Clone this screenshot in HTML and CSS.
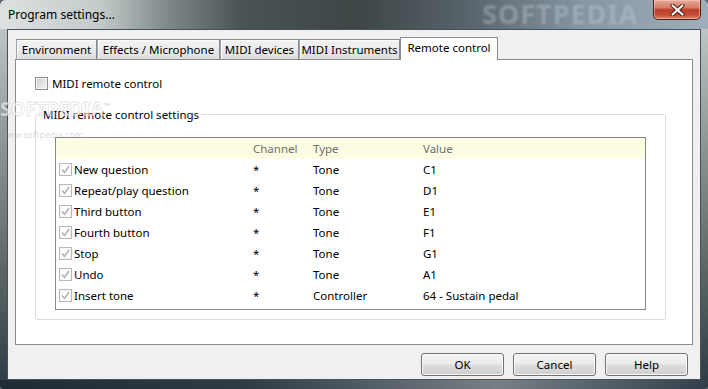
FILE: index.html
```html
<!DOCTYPE html>
<html>
<head>
  <title>Program settings...</title>
  <link rel="stylesheet" href="styles.css">
</head>
<body>
  <div class="window">
    <div class="titlebar">
      <span class="title">Program settings...</span>
      <button class="close" title="Close">
        <svg width="15" height="12" viewBox="0 0 15 12">
          <path d="M2.5 1.5 L12.5 10.5 M12.5 1.5 L2.5 10.5" stroke="#4d1b12" stroke-width="4.2" stroke-linecap="round"/>
          <path d="M2.5 1.5 L12.5 10.5 M12.5 1.5 L2.5 10.5" stroke="#ffffff" stroke-width="2.2" stroke-linecap="round"/>
        </svg>
      </button>
    </div>
    <div class="client">
      <div class="tabs">
        <div class="tab tab-env">Environment</div>
        <div class="tab tab-fx">Effects / Microphone</div>
        <div class="tab tab-dev">MIDI devices</div>
        <div class="tab tab-ins">MIDI Instruments</div>
        <div class="tab tab-remote active">Remote control</div>
      </div>
      <div class="panel">
        <label class="check">
          <span class="box"></span>
          MIDI remote control
        </label>
        <fieldset class="group">
          <legend>MIDI remote control settings</legend>
          <div class="list">
            <div class="row head">
              <span></span>
              <span>Channel</span>
              <span>Type</span>
              <span>Value</span>
            </div>
            <div class="row">
              <span class="name"><span class="box checked"></span>New question</span>
              <span>*</span><span>Tone</span><span>C1</span>
            </div>
            <div class="row">
              <span class="name"><span class="box checked"></span>Repeat/play question</span>
              <span>*</span><span>Tone</span><span>D1</span>
            </div>
            <div class="row">
              <span class="name"><span class="box checked"></span>Third button</span>
              <span>*</span><span>Tone</span><span>E1</span>
            </div>
            <div class="row">
              <span class="name"><span class="box checked"></span>Fourth button</span>
              <span>*</span><span>Tone</span><span>F1</span>
            </div>
            <div class="row">
              <span class="name"><span class="box checked"></span>Stop</span>
              <span>*</span><span>Tone</span><span>G1</span>
            </div>
            <div class="row">
              <span class="name"><span class="box checked"></span>Undo</span>
              <span>*</span><span>Tone</span><span>A1</span>
            </div>
            <div class="row">
              <span class="name"><span class="box checked"></span>Insert tone</span>
              <span>*</span><span>Controller</span><span>64 - Sustain pedal</span>
            </div>
          </div>
        </fieldset>
      </div>
      <div class="buttons">
        <button class="btn">OK</button>
        <button class="btn">Cancel</button>
        <button class="btn">Help</button>
      </div>
    </div>
    <div class="wm wm-title">SOFTPEDIA</div>
    <div class="wm wm-logo">SOFTPEDIA<sup>™</sup></div>
    <div class="wm wm-url">www.softpedia.com</div>
  </div>
</body>
</html>
```

FILE: styles.css
```css
* {
  box-sizing: border-box;
}
body {
  margin: 0;
  font-family: "Noto Sans", "DejaVu Sans", sans-serif;
  font-size: 11.5px;
  color: #000;
  background: #5d6a74;
}
.window {
  position: relative;
  width: 708px;
  height: 389px;
  padding: 0 7px 9px;
  display: flex;
  flex-direction: column;
  overflow: hidden;
  border-radius: 6px 6px 4px 4px;
  background:
    linear-gradient(90deg, rgba(20, 28, 34, 0.55) 0%, rgba(80, 100, 120, 0) 35%, rgba(255, 255, 255, 0.35) 70%, rgba(60, 80, 100, 0.2) 100%) bottom / 100% 9px no-repeat,
    linear-gradient(180deg, #c9cfd0 0%, #8f9a98 35%, #5b6664 70%, #2e3a44 100%);
}
.titlebar {
  height: 29px;
  margin: 0 -7px;
  padding: 0 7px 0 8px;
  display: flex;
  justify-content: space-between;
  align-items: flex-start;
  background: linear-gradient(90deg, #dde1e1 0%, #c4cbcb 14%, #7d8787 24%, #4b5454 34%, #3d4545 50%, #58636b 66%, #8595a1 82%, #9eafbb 100%);
}
.title {
  padding-top: 7px;
  line-height: 16px;
  font-size: 12px;
}
.close {
  width: 48px;
  height: 20px;
  padding: 0;
  display: flex;
  align-items: center;
  justify-content: center;
  border: 1px solid #4e2018;
  border-top: 0;
  border-radius: 0 0 5px 5px;
  background: linear-gradient(180deg, #e8ab9d 0%, #d67b66 40%, #bd3f27 52%, #c64f36 80%, #de8b70 100%);
  box-shadow: inset 0 0 0 1px rgba(255, 220, 210, 0.45);
}
.client {
  flex: 1;
  border: 1px solid #45525c;
  background: #f0f0f0;
  padding: 7px 7px 0;
}
.tabs {
  display: flex;
  align-items: flex-end;
  height: 22px;
  padding-left: 1px;
}
.tab {
  height: 20px;
  border: 1px solid #898c95;
  border-bottom: 0;
  border-left-color: #a0a3aa;
  background: linear-gradient(180deg, #f3f3f3 0%, #ebebeb 50%, #dddddd 100%);
  box-shadow: inset 1px 1px 0 #fbfbfb;
  display: flex;
  align-items: center;
  justify-content: center;
  white-space: nowrap;
}
.tab-env { width: 81px; }
.tab-fx { width: 123px; }
.tab-dev { width: 79px; }
.tab-ins { width: 101px; }
.tab-remote { width: 98px; }
.tab.active {
  height: 23px;
  margin-bottom: -1px;
  position: relative;
  z-index: 1;
  background: #fff;
  box-shadow: none;
  border-left-color: #898c95;
  padding-bottom: 3px;
}
.panel {
  height: 286px;
  border: 1px solid #898c95;
  background: #fff;
  padding: 17px 26px 0 19px;
}
.check {
  display: flex;
  align-items: center;
  gap: 4px;
  height: 13px;
  line-height: 13px;
}
.box {
  flex: none;
  width: 13px;
  height: 13px;
  border: 1px solid #8e8f8f;
  background: linear-gradient(135deg, #c9cdd2 0%, #e4e5e7 60%, #f4f4f4 100%);
  box-shadow: inset 0 0 0 1px #f4f4f4;
}
.box.checked {
  border-color: #b8b8b8;
  background: #fff url("data:image/svg+xml;utf8,<svg xmlns='http://www.w3.org/2000/svg' width='11' height='11'><path d='M2 5.5 L4.5 8.5 L9 2' fill='none' stroke='%23b2b2b2' stroke-width='1.6'/></svg>") center no-repeat;
  box-shadow: inset 0 0 0 1px #f7f7f7;
}
.group {
  margin: 17px 0 0;
  padding: 0;
  border: 1px solid #d5dfe5;
  border-radius: 3px;
  box-shadow: 1px 1px 0 #fff inset;
}
.group legend {
  margin-left: 5px;
  padding: 0 2px;
  line-height: 15px;
}
.list {
  margin: 15px 19px 9px;
  border: 1px solid #828790;
  padding-bottom: 3px;
}
.row {
  display: grid;
  grid-template-columns: 197px 60px 110px 1fr;
  height: 21px;
  align-items: center;
  white-space: nowrap;
}
.row.head {
  background: #fdfde1;
  color: #6d6d6d;
}
.name {
  display: flex;
  align-items: center;
  gap: 2px;
  padding-left: 3px;
}
.buttons {
  display: flex;
  justify-content: flex-end;
  gap: 9px;
  margin-top: 8px;
  padding-right: 5px;
}
.btn {
  width: 83px;
  height: 23px;
  padding: 0;
  font: inherit;
  color: #000;
  border: 1px solid #707070;
  border-radius: 3px;
  background: linear-gradient(180deg, #f2f2f2 0%, #ebebeb 48%, #dddddd 52%, #cfcfcf 100%);
  box-shadow: inset 0 0 0 1px #fbfbfb;
}
.wm {
  position: absolute;
  pointer-events: none;
  white-space: nowrap;
}
.wm-title {
  left: 482px;
  top: -4px;
  font-size: 27px;
  line-height: 36px;
  font-weight: bold;
  letter-spacing: 1px;
  color: rgba(200, 215, 225, 0.35);
  filter: blur(1.2px);
}
.wm-logo {
  left: 0;
  top: 95px;
  font-size: 19px;
  line-height: 22px;
  font-weight: bold;
  color: rgba(255, 255, 255, 0.6);
  -webkit-text-stroke: 1px rgba(150, 150, 150, 0.25);
}
.wm-logo sup {
  font-size: 9px;
  color: rgba(150, 150, 150, 0.4);
  -webkit-text-stroke: 0;
}
.wm-url {
  left: 0;
  top: 128px;
  font-size: 9px;
  color: rgba(150, 150, 150, 0.35);
}
```
